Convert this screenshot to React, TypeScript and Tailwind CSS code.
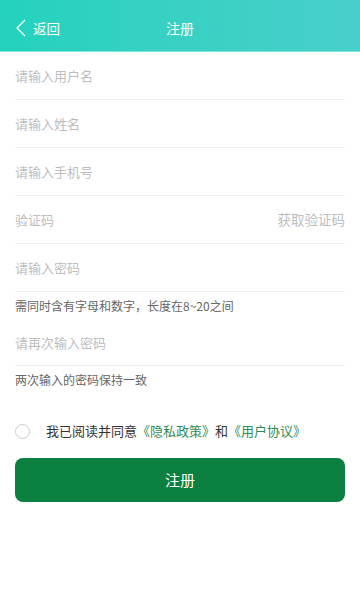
const font = { fontFamily: '"Noto Sans CJK SC", "Noto Sans", sans-serif' };

function Field({ placeholder, right, tall = true }: { placeholder: string; right?: string; tall?: boolean }) {
  return (
    <div className={`flex items-center justify-between border-b border-[#eeeeee] ${tall ? "h-12" : "h-[46px]"}`}>
      <input
        className="w-full bg-transparent text-[13px] text-[#333] outline-none placeholder:text-[#bdbdbd]"
        placeholder={placeholder}
      />
      {right && <span className="shrink-0 text-[13.5px] text-[#bdbdbd]">{right}</span>}
    </div>
  );
}

function Hint({ children }: { children: string }) {
  return <div className="flex h-7 items-center text-[12px] text-[#666]">{children}</div>;
}

export default function App() {
  return (
    <div className="min-h-[600px] w-[360px] bg-white" style={font}>
      <header className="flex h-[52px] items-center bg-gradient-to-r from-[#22d2bc] to-[#48cfcb] px-[15px] pt-[5px] text-white border-b border-[#7fe6d6]">
        <button className="flex w-[80px] items-center gap-[7px]">
          <svg width="11" height="18" viewBox="0 0 11 18" fill="none">
            <path d="M9.5 1.5 2 9l7.5 7.5" stroke="white" strokeWidth="1.3" strokeLinecap="round" strokeLinejoin="round" />
          </svg>
          <span className="text-[13.5px]">返回</span>
        </button>
        <h1 className="flex-1 text-center text-[14px]">注册</h1>
        <div className="w-[80px]" />
      </header>

      <main className="px-[15px]">
        <Field placeholder="请输入用户名" />
        <Field placeholder="请输入姓名" />
        <Field placeholder="请输入手机号" />
        <Field placeholder="验证码" right="获取验证码" />
        <Field placeholder="请输入密码" />
        <Hint>需同时含有字母和数字，长度在8~20之间</Hint>
        <Field placeholder="请再次输入密码" tall={false} />
        <Hint>两次输入的密码保持一致</Hint>

        <label className="mt-[28px] flex h-[18px] items-center text-[13px] text-[#333]">
          <span className="mr-4 h-[15px] w-[15px] rounded-full border border-[#cccccc]" />
          我已阅读并同意
          <span className="text-[#2e8b57]">《隐私政策》</span>和<span className="text-[#2e8b57]">《用户协议》</span>
        </label>

        <button className="mt-[18px] flex h-[44px] w-full items-center justify-center rounded-[8px] bg-[#0a7f40] text-[15px] text-white">
          注册
        </button>
      </main>
    </div>
  );
}
